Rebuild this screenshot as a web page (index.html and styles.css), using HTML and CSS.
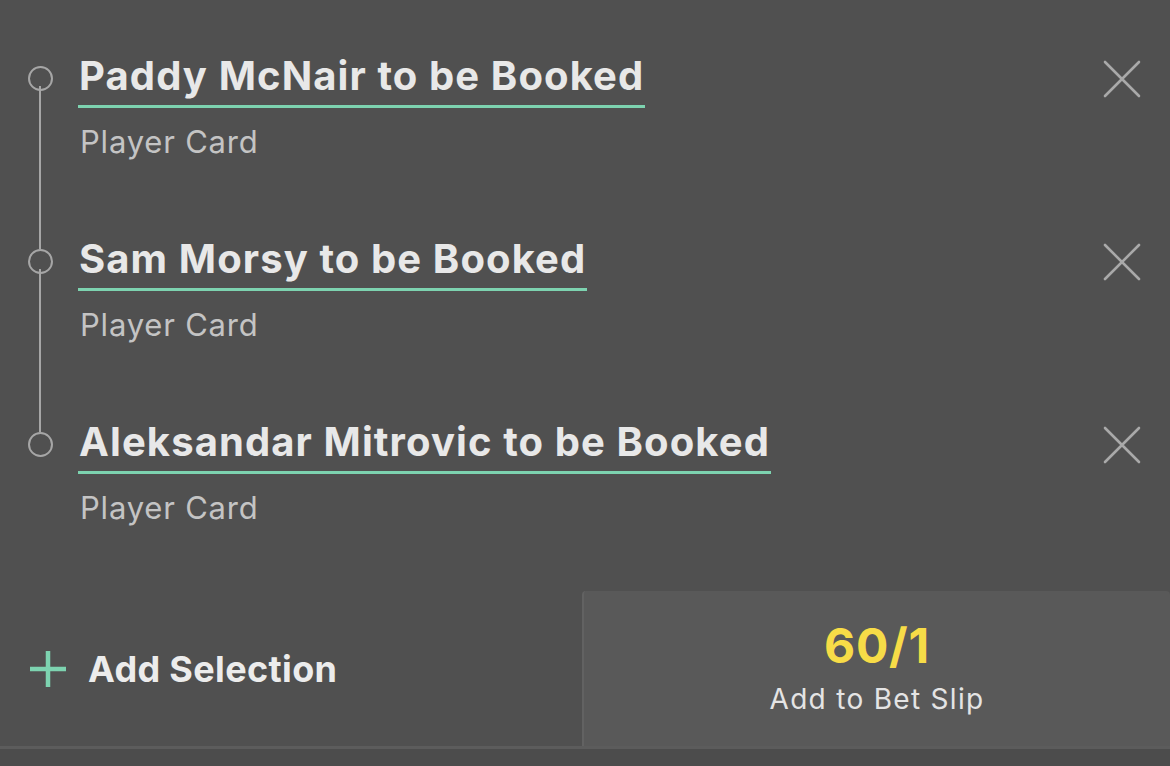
FILE: index.html
```html
<!DOCTYPE html>
<html lang="en">
<head>
<meta charset="utf-8">
<title>Bet Builder</title>
<link rel="stylesheet" href="styles.css">
</head>
<body>
<div class="panel">
  <ul class="selections">
    <li class="sel">
      <span class="marker"></span>
      <div class="info">
        <span class="title">Paddy McNair to be Booked</span>
        <span class="market">Player Card</span>
      </div>
      <button class="remove" aria-label="Remove"><svg viewBox="0 0 38 38" width="38" height="38"><path d="M2 2L36 36M36 2L2 36" stroke="#a9a9a9" stroke-width="2.6" stroke-linecap="round" fill="none"/></svg></button>
    </li>
    <li class="sel">
      <span class="marker"></span>
      <div class="info">
        <span class="title">Sam Morsy to be Booked</span>
        <span class="market">Player Card</span>
      </div>
      <button class="remove" aria-label="Remove"><svg viewBox="0 0 38 38" width="38" height="38"><path d="M2 2L36 36M36 2L2 36" stroke="#a9a9a9" stroke-width="2.6" stroke-linecap="round" fill="none"/></svg></button>
    </li>
    <li class="sel">
      <span class="marker"></span>
      <div class="info">
        <span class="title">Aleksandar Mitrovic to be Booked</span>
        <span class="market">Player Card</span>
      </div>
      <button class="remove" aria-label="Remove"><svg viewBox="0 0 38 38" width="38" height="38"><path d="M2 2L36 36M36 2L2 36" stroke="#a9a9a9" stroke-width="2.6" stroke-linecap="round" fill="none"/></svg></button>
    </li>
  </ul>
  <div class="footer">
    <button class="add">
      <svg viewBox="0 0 36 36" width="36" height="36"><path d="M18 0V36M0 18H36" stroke="#7dd3b0" stroke-width="4.5" fill="none"/></svg>
      <span>Add Selection</span>
    </button>
    <button class="betslip">
      <span class="odds">60/1</span>
      <span class="label">Add to Bet Slip</span>
    </button>
  </div>
  <div class="bottom"></div>
</div>
</body>
</html>
```
FILE: styles.css
```css
* { box-sizing: border-box; }
html, body {
  margin: 0;
  padding: 0;
  background: #505050;
  font-family: Inter, "Noto Sans", sans-serif;
}
.panel {
  width: 1170px;
  height: 766px;
  display: flex;
  flex-direction: column;
  overflow: hidden;
}
.selections {
  list-style: none;
  margin: 0;
  padding: 52px 0 0 0;
  display: flex;
  flex-direction: column;
}
.sel {
  position: relative;
  display: flex;
  align-items: flex-start;
  height: 183px;
}
.marker {
  width: 80px;
  flex: none;
  display: flex;
  justify-content: center;
  padding-top: 14px;
}
.marker::before {
  content: "";
  display: block;
  width: 21px;
  height: 21px;
  border: 2px solid #a6a6a6;
  border-radius: 50%;
  margin-left: 1px;
}
.sel:not(:last-child)::after {
  content: "";
  position: absolute;
  left: 39px;
  top: 34px;
  width: 2px;
  height: 163px;
  background: #a6a6a6;
}
.info {
  flex: 1;
  display: flex;
  flex-direction: column;
  align-items: flex-start;
}
.title {
  font-size: 40px;
  font-weight: 700;
  color: #e8e8e8;
  line-height: 48px;
  padding: 0 1px 5px 1px;
  margin-left: -2px;
  border-bottom: 3px solid #7dd3b0;
  letter-spacing: 1.1px;
}
.market {
  margin-top: 16px;
  font-size: 31px;
  color: #c4c4c4;
  line-height: 36px;
  letter-spacing: 0.8px;
}
.remove {
  background: none;
  border: 0;
  padding: 0;
  margin: 8px 29px 0 0;
  width: 38px;
  height: 38px;
  cursor: pointer;
}
.remove svg { display: block; }
.footer {
  margin-top: -10px;
  display: flex;
  height: 155px;
}
button { font-family: inherit; }
.add {
  width: 582px;
  flex: none;
  background: none;
  border: 0;
  display: flex;
  align-items: center;
  gap: 22px;
  padding: 0 0 0 30px;
  color: #ececec;
  font-size: 36px;
  font-weight: 700;
  letter-spacing: 0.35px;
}
.add svg { display: block; }
.betslip {
  flex: 1;
  background: #595959;
  border: 0;
  border-left: 2px solid #626262;
  border-radius: 4px 4px 0 0;
  display: flex;
  flex-direction: column;
  align-items: center;
  justify-content: center;
  gap: 8px;
  padding: 0 0 4px 0;
}
.odds {
  font-size: 48px;
  font-weight: 700;
  color: #f7dc47;
  line-height: 56px;
  letter-spacing: 0.8px;
}
.label {
  font-size: 28px;
  color: #e4e4e4;
  line-height: 34px;
  letter-spacing: 1.3px;
}
.bottom {
  flex: 1;
  border-top: 3px solid #5c5c5c;
  background: #4c4c4c;
}
```
